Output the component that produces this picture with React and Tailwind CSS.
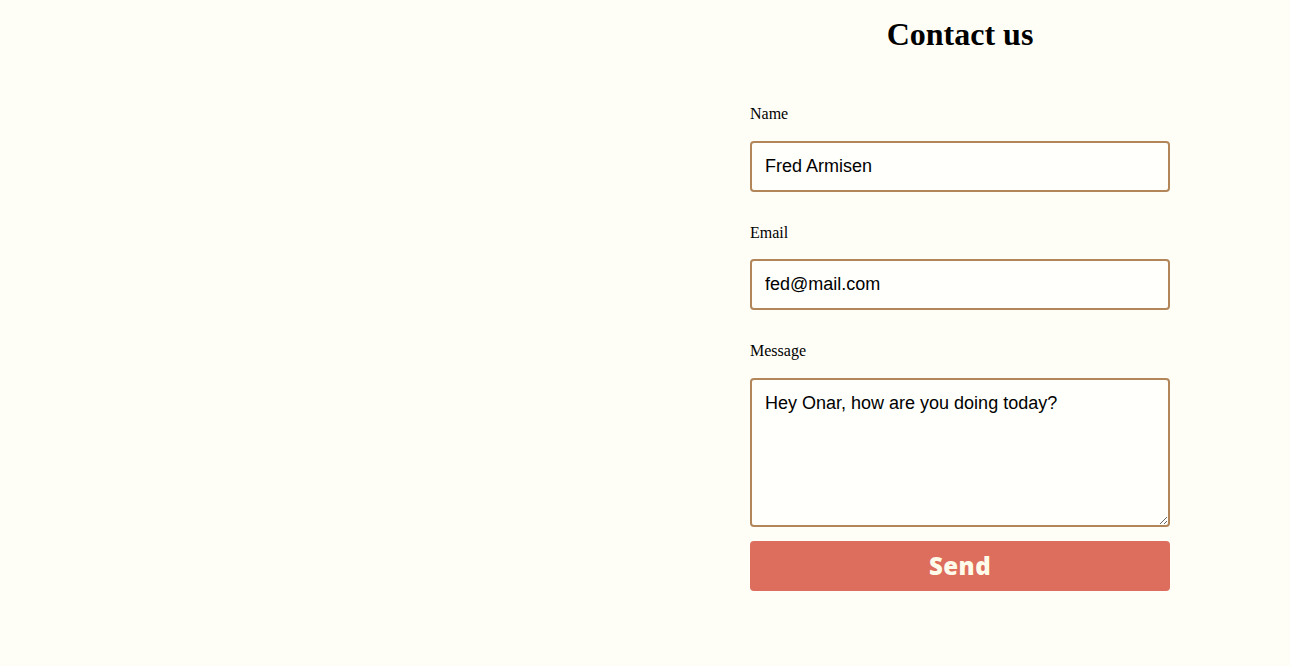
import { useState } from 'react';

const serif = { fontFamily: '"Liberation Serif", "Times New Roman", serif' };

function Field({ label, children, className }) {
  return (
    <label className={className}>
      <span className="block text-[16px] leading-[18px] text-black" style={serif}>
        {label}
      </span>
      {children}
    </label>
  );
}

const inputBase =
  'block w-full h-[51px] px-[13px] border-2 border-[#b3865a] rounded-[4px] bg-[#fffffb] text-[18px] text-black outline-none font-["Liberation_Sans",Arial,sans-serif]';

export default function App() {
  const [name, setName] = useState('Fred Armisen');
  const [email, setEmail] = useState('fed@mail.com');
  const [message, setMessage] = useState('Hey Onar, how are you doing today?');

  return (
    <div className="min-h-[666px] w-full bg-[#fefef7] flex">
      <div className="w-[750px] shrink-0" />
      <form className="w-[420px] flex flex-col" onSubmit={(e) => e.preventDefault()}>
        <h1
          className="mt-[16px] text-center text-[32px] leading-[37px] font-bold text-black"
          style={serif}
        >
          Contact us
        </h1>

        <Field label="Name" className="block mt-[52px]">
          <input
            className={`${inputBase} mt-[18px]`}
            value={name}
            onChange={(e) => setName(e.target.value)}
          />
        </Field>

        <Field label="Email" className="block mt-[32px]">
          <input
            className={`${inputBase} mt-[17px]`}
            value={email}
            onChange={(e) => setEmail(e.target.value)}
          />
        </Field>

        <Field label="Message" className="block mt-[32px]">
          <textarea
            className='block w-full mt-[18px] h-[149px] px-[13px] py-[12px] border-2 border-[#b3865a] rounded-[4px] bg-[#fffffb] text-[18px] leading-[22px] text-black outline-none resize-y font-["Liberation_Sans",Arial,sans-serif]'
            value={message}
            onChange={(e) => setMessage(e.target.value)}
          />
        </Field>

        <button
          type="submit"
          className='mt-[14px] h-[50px] w-full rounded-[4px] bg-[#dd6d5c] text-[#fffbea] text-[24px] font-extrabold tracking-[0.5px] font-["Open_Sans",Lato,sans-serif]'
        >
          Send
        </button>
      </form>
    </div>
  );
}
